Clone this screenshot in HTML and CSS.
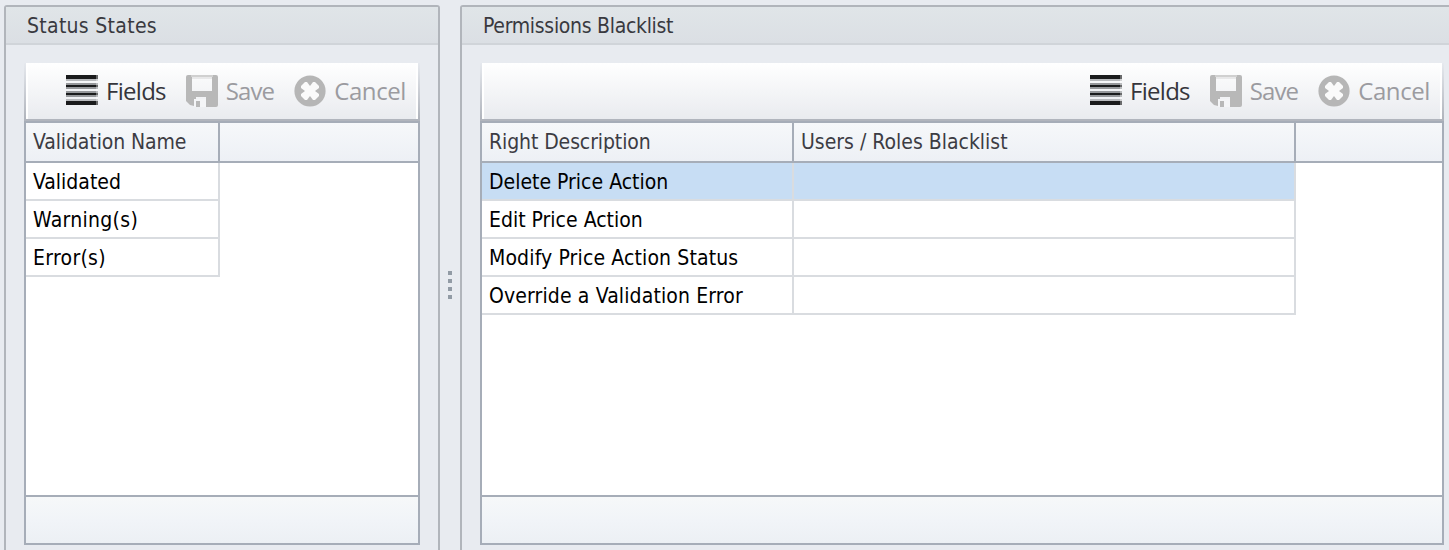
FILE: index.html
```html
<!DOCTYPE html>
<html lang="en">
<head>
<meta charset="utf-8">
<title>Status States</title>
<link rel="stylesheet" href="styles.css">
</head>
<body>
<svg width="0" height="0" class="defs">
  <defs>
    <symbol id="fields" viewBox="0 0 32 32">
      <path fill="#b8babd" d="M0 4h32v2H0zM0 24h32v2H0z"/>
      <path fill="#96989b" d="M0 8h32v2H0zM0 12h32v2H0zM0 16h32v2H0zM0 20h32v2H0z"/>
      <path fill="#1a1b1c" d="M0 0h32v4H0zM0 10h32v2H0zM0 18h32v2H0zM0 26h32v4H0z"/>
      <path fill="#fff" opacity=".35" d="M30 0h2v30h-2z"/>
    </symbol>
    <symbol id="save" viewBox="0 0 32 32">
      <path fill="#b8b8b8" fill-rule="evenodd" d="M2 0h28q2 0 2 2v28q0 2-2 2h-8V22H10v4H8v5L4 30l-4-4V2Q0 0 2 0zM6 4v12h20V4z"/>
      <path fill="#d0d0d0" d="M5 0h22v2H5z"/>
      <path fill="#e8e8e9" d="M6 2h20v2H6z"/>
      <path fill="#f4f5f7" d="M8 24h12v8H8z"/>
      <path fill="#b8b8b8" d="M10 26h4v6h-4zM20 22h2v10h-2z"/>
    </symbol>
    <symbol id="cancel" viewBox="0 0 32 32">
      <circle cx="16" cy="16" r="15.6" fill="#b6b6b6"/>
      <path fill="#fafafa" d="M11 7h2l3 4 3-4h2l4 4v2l-4 3 4 3v2l-4 4h-2l-3-4-3 4h-2l-4-4v-2l4-3-4-3v-2z"/>
    </symbol>
  </defs>
</svg>
<main class="layout">
  <section class="panel panel-states">
    <h2 class="panel-title"><span class="wide">Status States</span></h2>
    <div class="panel-body">
      <div class="toolbar">
        <span class="tool"><svg class="icon"><use href="#fields"/></svg><span class="l-fields">Fields</span></span>
        <span class="tool off"><svg class="icon"><use href="#save"/></svg><span class="l-save">Save</span></span>
        <span class="tool off"><svg class="icon"><use href="#cancel"/></svg><span class="l-cancel">Cancel</span></span>
      </div>
      <div class="grid">
        <div class="head cols"><div><span>Validation Name</span></div><div></div></div>
        <div class="rows">
          <div class="row cols"><div><span>Validated</span></div></div>
          <div class="row cols"><div><span class="wide">Warning(s)</span></div></div>
          <div class="row cols"><div><span class="wide">Error(s)</span></div></div>
        </div>
        <div class="foot"></div>
      </div>
    </div>
  </section>
  <div class="splitter"><i></i><i></i><i></i><i></i></div>
  <section class="panel panel-rights">
    <h2 class="panel-title"><span>Permissions Blacklist</span></h2>
    <div class="panel-body">
      <div class="toolbar">
        <span class="tool"><svg class="icon"><use href="#fields"/></svg><span class="l-fields">Fields</span></span>
        <span class="tool off"><svg class="icon"><use href="#save"/></svg><span class="l-save">Save</span></span>
        <span class="tool off"><svg class="icon"><use href="#cancel"/></svg><span class="l-cancel">Cancel</span></span>
      </div>
      <div class="grid">
        <div class="head cols"><div><span>Right Description</span></div><div><span class="roles">Users / Roles Blacklist</span></div><div></div></div>
        <div class="rows">
          <div class="row cols selected"><div><span>Delete Price Action</span></div><div></div></div>
          <div class="row cols"><div><span>Edit Price Action</span></div><div></div></div>
          <div class="row cols"><div><span class="long">Modify Price Action Status</span></div><div></div></div>
          <div class="row cols"><div><span class="long">Override a Validation Error</span></div><div></div></div>
        </div>
        <div class="foot"></div>
      </div>
    </div>
  </section>
</main>
</body>
</html>
```
FILE: styles.css
```css
* { box-sizing: border-box; }
body { margin: 0; background: #e8ebf0; overflow: hidden; font-family: "DejaVu Sans Condensed", "DejaVu Sans", sans-serif; font-stretch: condensed; font-size: 21px; letter-spacing: 0; color: #000; white-space: nowrap; }
.defs { position: absolute; }
.layout { display: flex; height: 550px; padding: 5px 0 0 4px; }
.panel { flex: none; height: 560px; border: 2px solid #b1b5bb; border-radius: 3px 3px 0 0; }
.panel-states { width: 436px; }
.panel-rights { width: 1004px; }
.panel-title { margin: 0; height: 38px; padding-left: 21px; border-bottom: 2px solid #d0d4d9; background: linear-gradient(#e0e5e8, #dbdfe4); font-size: inherit; font-weight: normal; line-height: 38px; letter-spacing: -0.3px; color: #39393f; }
.panel-body { padding: 18px 18px 0; }
.panel-rights .panel-body { width: 1000px; }
.panel-rights .toolbar, .panel-rights .grid { width: 964px; }
.toolbar { display: flex; justify-content: flex-end; height: 58px; padding: 12px 12px 0 0; border: 2px solid; border-top: 0; border-image: linear-gradient(#e8ebf0, #b1b5bd 95%) 2; background: linear-gradient(#fff, #e9ebef); box-shadow: inset 2px 0 #fff, inset -2px 0 #fff; }
.tool { display: flex; color: #35353b; font: 24px/31px "Open Sans", sans-serif; letter-spacing: -0.4px; }
.l-fields { letter-spacing: -0.73px; }
.l-save { letter-spacing: -0.9px; }
.off { margin-left: 20px; color: #9b9ba0; }
.icon { flex: none; width: 32px; height: 32px; margin-right: 8px; }
.grid { height: 424px; display: flex; flex-direction: column; border: 2px solid #a6adb8; background: #fff; }
.cols { display: grid; }
.panel-states .cols { grid-template-columns: 194px 1fr; }
.panel-rights .cols { grid-template-columns: 312px 502px 1fr; }
.cols > div { padding-left: 7px; }
.head { height: 40px; border-bottom: 2px solid #a6adb8; background: linear-gradient(#f6f8fa, #edf0f5); color: #3c3c43; line-height: 38px; letter-spacing: -0.1px; }
.head > div { border-right: 2px solid #a6adb8; }
.head > div:last-child { border-right: 0; }
.rows { flex: 1; }
.row { height: 38px; line-height: 38px; }
.wide { letter-spacing: 0.3px; }
.long { letter-spacing: 0.13px; }
.roles { letter-spacing: 0; }
.row > div { height: 38px; border-right: 2px solid #d9dce0; border-bottom: 2px solid #d9dce0; }
.selected > div { background: #c7ddf4; }
.foot { height: 48px; border-top: 2px solid #a6adb8; background: linear-gradient(#f6f8f9, #f1f4f8 50%, #ecf0f4); }
.splitter { flex: none; width: 20px; padding-top: 266px; display: flex; flex-direction: column; align-items: center; gap: 4px; }
.splitter i { width: 4px; height: 4px; background: #929ba5; }
```
